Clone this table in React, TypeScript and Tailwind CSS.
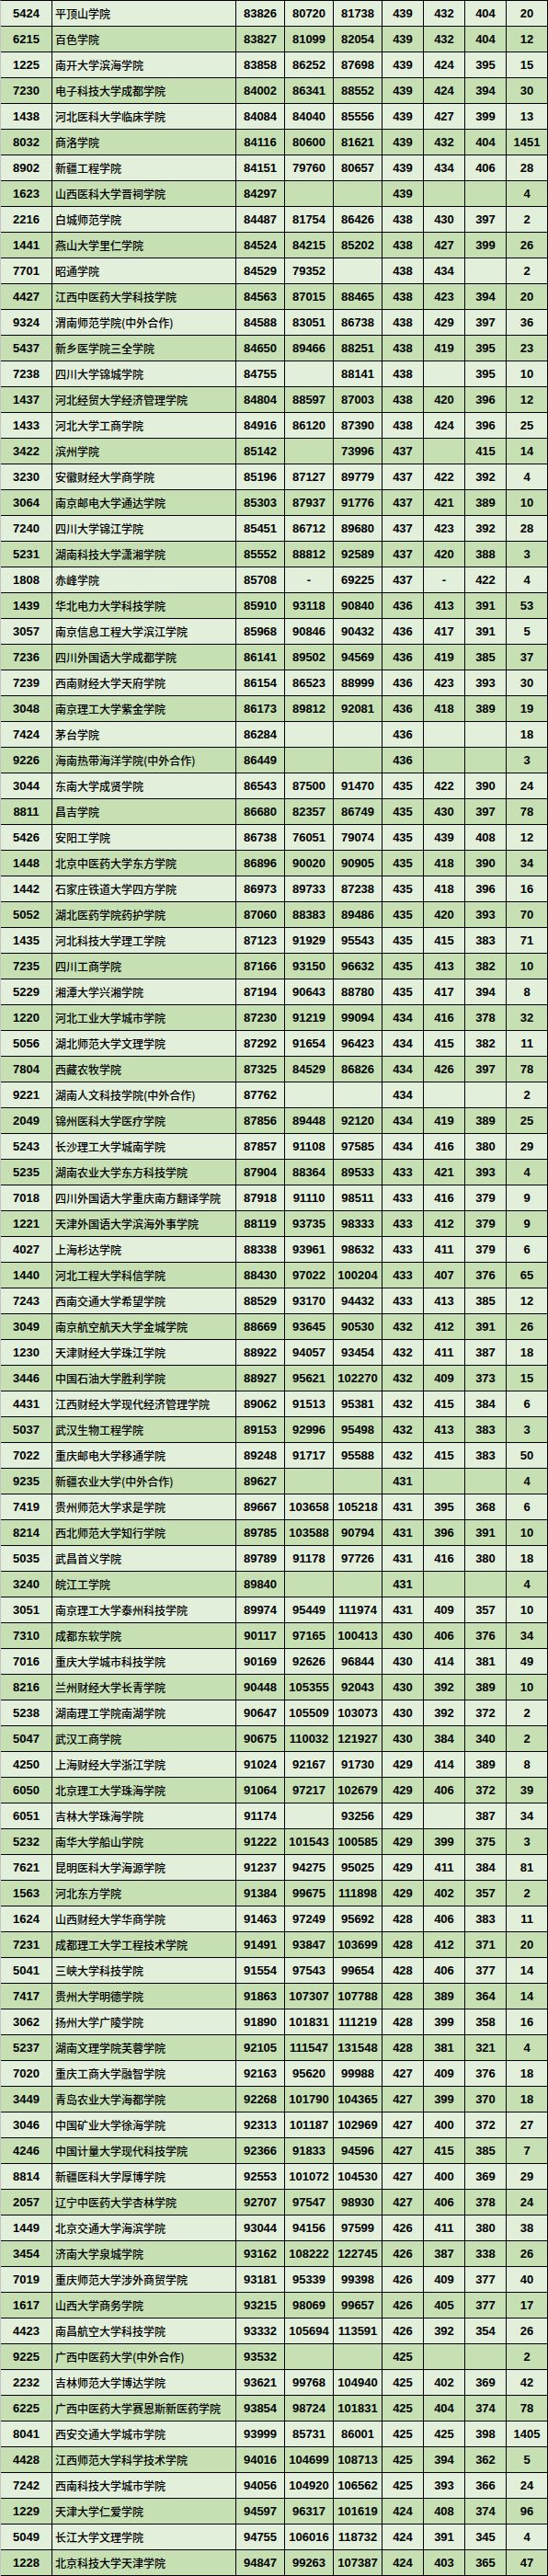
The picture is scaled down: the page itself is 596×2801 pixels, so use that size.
const ROWS: string[] = [
  "5424|平顶山学院|83826|80720|81738|439|432|404|20",
  "6215|百色学院|83827|81099|82054|439|432|404|12",
  "1225|南开大学滨海学院|83858|86252|87698|439|424|395|15",
  "7230|电子科技大学成都学院|84002|86341|88552|439|424|394|30",
  "1438|河北医科大学临床学院|84084|84040|85556|439|427|399|13",
  "8032|商洛学院|84116|80600|81621|439|432|404|1451",
  "8902|新疆工程学院|84151|79760|80657|439|434|406|28",
  "1623|山西医科大学晋祠学院|84297|||439|||4",
  "2216|白城师范学院|84487|81754|86426|438|430|397|2",
  "1441|燕山大学里仁学院|84524|84215|85202|438|427|399|26",
  "7701|昭通学院|84529|79352||438|434||2",
  "4427|江西中医药大学科技学院|84563|87015|88465|438|423|394|20",
  "9324|渭南师范学院(中外合作)|84588|83051|86738|438|429|397|36",
  "5437|新乡医学院三全学院|84650|89466|88251|438|419|395|23",
  "7238|四川大学锦城学院|84755||88141|438||395|10",
  "1437|河北经贸大学经济管理学院|84804|88597|87003|438|420|396|12",
  "1433|河北大学工商学院|84916|86120|87390|438|424|396|25",
  "3422|滨州学院|85142||73996|437||415|14",
  "3230|安徽财经大学商学院|85196|87127|89779|437|422|392|4",
  "3064|南京邮电大学通达学院|85303|87937|91776|437|421|389|10",
  "7240|四川大学锦江学院|85451|86712|89680|437|423|392|28",
  "5231|湖南科技大学潇湘学院|85552|88812|92589|437|420|388|3",
  "1808|赤峰学院|85708|-|69225|437|-|422|4",
  "1439|华北电力大学科技学院|85910|93118|90840|436|413|391|53",
  "3057|南京信息工程大学滨江学院|85968|90846|90432|436|417|391|5",
  "7236|四川外国语大学成都学院|86141|89502|94569|436|419|385|37",
  "7239|西南财经大学天府学院|86154|86523|88999|436|423|393|30",
  "3048|南京理工大学紫金学院|86173|89812|92081|436|418|389|19",
  "7424|茅台学院|86284|||436|||18",
  "9226|海南热带海洋学院(中外合作)|86449|||436|||3",
  "3044|东南大学成贤学院|86543|87500|91470|435|422|390|24",
  "8811|昌吉学院|86680|82357|86749|435|430|397|78",
  "5426|安阳工学院|86738|76051|79074|435|439|408|12",
  "1448|北京中医药大学东方学院|86896|90020|90905|435|418|390|34",
  "1442|石家庄铁道大学四方学院|86973|89733|87238|435|418|396|16",
  "5052|湖北医药学院药护学院|87060|88383|89486|435|420|393|70",
  "1435|河北科技大学理工学院|87123|91929|95543|435|415|383|71",
  "7235|四川工商学院|87166|93150|96632|435|413|382|10",
  "5229|湘潭大学兴湘学院|87194|90643|88780|435|417|394|8",
  "1220|河北工业大学城市学院|87230|91219|99094|434|416|378|32",
  "5056|湖北师范大学文理学院|87292|91654|96423|434|415|382|11",
  "7804|西藏农牧学院|87325|84529|86826|434|426|397|78",
  "9221|湖南人文科技学院(中外合作)|87762|||434|||2",
  "2049|锦州医科大学医疗学院|87856|89448|92120|434|419|389|25",
  "5243|长沙理工大学城南学院|87857|91108|97585|434|416|380|29",
  "5235|湖南农业大学东方科技学院|87904|88364|89533|433|421|393|4",
  "7018|四川外国语大学重庆南方翻译学院|87918|91110|98511|433|416|379|9",
  "1221|天津外国语大学滨海外事学院|88119|93735|98333|433|412|379|9",
  "4027|上海杉达学院|88338|93961|98632|433|411|379|6",
  "1440|河北工程大学科信学院|88430|97022|100204|433|407|376|65",
  "7243|西南交通大学希望学院|88529|93170|94432|433|413|385|12",
  "3049|南京航空航天大学金城学院|88669|93645|90530|432|412|391|26",
  "1230|天津财经大学珠江学院|88922|94057|93454|432|411|387|18",
  "3446|中国石油大学胜利学院|88927|95621|102270|432|409|373|15",
  "4431|江西财经大学现代经济管理学院|89062|91513|95381|432|415|384|6",
  "5037|武汉生物工程学院|89153|92996|95498|432|413|383|3",
  "7022|重庆邮电大学移通学院|89248|91717|95588|432|415|383|50",
  "9235|新疆农业大学(中外合作)|89627|||431|||4",
  "7419|贵州师范大学求是学院|89667|103658|105218|431|395|368|6",
  "8214|西北师范大学知行学院|89785|103588|90794|431|396|391|10",
  "5035|武昌首义学院|89789|91178|97726|431|416|380|18",
  "3240|皖江工学院|89840|||431|||4",
  "3051|南京理工大学泰州科技学院|89974|95449|111974|431|409|357|10",
  "7310|成都东软学院|90117|97165|100413|430|406|376|34",
  "7016|重庆大学城市科技学院|90169|92626|96844|430|414|381|49",
  "8216|兰州财经大学长青学院|90448|105355|92043|430|392|389|10",
  "5238|湖南理工学院南湖学院|90647|105509|103073|430|392|372|2",
  "5047|武汉工商学院|90675|110032|121927|430|384|340|2",
  "4250|上海财经大学浙江学院|91024|92167|91730|429|414|389|8",
  "6050|北京理工大学珠海学院|91064|97217|102679|429|406|372|39",
  "6051|吉林大学珠海学院|91174||93256|429||387|34",
  "5232|南华大学船山学院|91222|101543|100585|429|399|375|3",
  "7621|昆明医科大学海源学院|91237|94275|95025|429|411|384|81",
  "1563|河北东方学院|91384|99675|111898|429|402|357|2",
  "1624|山西财经大学华商学院|91463|97249|95692|428|406|383|11",
  "7231|成都理工大学工程技术学院|91491|93847|103699|428|412|371|20",
  "5041|三峡大学科技学院|91554|97543|99654|428|406|377|14",
  "7417|贵州大学明德学院|91863|107307|107788|428|389|364|14",
  "3062|扬州大学广陵学院|91890|101831|111219|428|399|358|16",
  "5237|湖南文理学院芙蓉学院|92105|111547|131548|428|381|321|4",
  "7020|重庆工商大学融智学院|92163|95620|99988|427|409|376|18",
  "3449|青岛农业大学海都学院|92268|101790|104365|427|399|370|18",
  "3046|中国矿业大学徐海学院|92313|101187|102969|427|400|372|27",
  "4246|中国计量大学现代科技学院|92366|91833|94596|427|415|385|7",
  "8814|新疆医科大学厚博学院|92553|101072|104530|427|400|369|29",
  "2057|辽宁中医药大学杏林学院|92707|97547|98930|427|406|378|24",
  "1449|北京交通大学海滨学院|93044|94156|97599|426|411|380|38",
  "3454|济南大学泉城学院|93162|108222|122745|426|387|338|26",
  "7019|重庆师范大学涉外商贸学院|93181|95339|99398|426|409|377|40",
  "1617|山西大学商务学院|93215|98069|99657|426|405|377|17",
  "4423|南昌航空大学科技学院|93332|105694|113591|426|392|354|26",
  "9225|广西中医药大学(中外合作)|93532|||425|||2",
  "2232|吉林师范大学博达学院|93621|99768|104940|425|402|369|42",
  "6225|广西中医药大学赛恩斯新医药学院|93854|98724|101831|425|404|374|78",
  "8041|西安交通大学城市学院|93999|85731|86001|425|425|398|1405",
  "4428|江西师范大学科学技术学院|94016|104699|108713|425|394|362|5",
  "7242|西南科技大学城市学院|94056|104920|106562|425|393|366|24",
  "1229|天津大学仁爱学院|94597|96317|101619|424|408|374|96",
  "5049|长江大学文理学院|94755|106016|118732|424|391|345|4",
  "1228|北京科技大学天津学院|94847|99263|107387|424|403|365|47",
];

const num = "flex items-center justify-center border-r border-black font-bold text-[13px]";

export default function App() {
  return (
    <div className="w-[596px] border-t border-l border-t-black border-l-[#c4c4c4] text-black font-['Liberation_Sans',Arial,sans-serif]">
      {ROWS.map((line, i) => {
        const [code, name, ...vals] = line.split("|");
        const bg = i % 2 === 0 ? "bg-[#e2efda]" : "bg-[#c6e0b4]";
        return (
          <div
            key={code + i}
            className={`grid grid-cols-[56px_200px_53px_53px_53px_45px_45px_45px_45px] h-[28px] border-b border-black ${bg}`}
          >
            <div className={num}>{code}</div>
            <div className="flex items-center border-r border-black pl-[3px] text-[12px] font-medium whitespace-nowrap overflow-hidden font-['Noto_Sans_CJK_SC','Noto_Sans',sans-serif]">
              {name}
            </div>
            {vals.map((v, j) => (
              <div key={j} className={num}>
                {v}
              </div>
            ))}
          </div>
        );
      })}
    </div>
  );
}
